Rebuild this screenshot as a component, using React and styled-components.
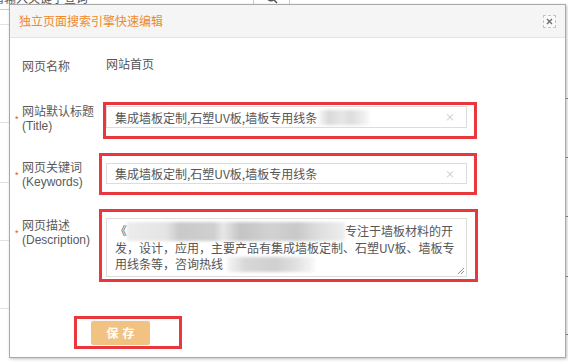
import React from 'react';
import styled, { createGlobalStyle } from 'styled-components';

const GlobalStyle = createGlobalStyle`
  html, body { margin: 0; padding: 0; background: #fff; }
  body {
    font-family: "Noto Sans CJK SC", "Noto Sans", sans-serif;
    overflow: hidden;
  }
`;

const Page = styled.div`
  position: relative;
  width: 568px;
  height: 364px;
  overflow: hidden;
  background: #fff;
`;

/* ---------- background page (mostly hidden) ---------- */
const Backdrop = styled.div`
  display: flex;
  flex-direction: column;
`;

const SearchBar = styled.div`
  display: flex;
  margin-top: -14px;
  height: 24px;
`;

const SearchInput = styled.div`
  width: 254px;
  box-sizing: border-box;
  border-right: 1px solid #ccc;
  border-bottom: 1px solid #ccc;
  font-size: 12px;
  line-height: 24px;
  color: #555;
  text-indent: -8px;
  white-space: nowrap;
  overflow: hidden;
`;

const SearchButton = styled.div`
  width: 36px;
  box-sizing: border-box;
  border-right: 1px solid #ccc;
  border-bottom: 1px solid #ccc;
  display: flex;
  align-items: center;
  justify-content: center;
  color: #444;
`;

const BgColumns = styled.div`
  display: flex;
  justify-content: space-between;
`;

const BgColumn = styled.div`
  width: ${p => p.$w}px;
  display: flex;
  flex-direction: column;
`;

const BgRow = styled.div`
  height: ${p => p.$h}px;
  box-sizing: border-box;
  border-bottom: 1px solid ${p => p.$c || '#e2e2e2'};
`;

/* ---------- dialog ---------- */
const Dialog = styled.div`
  position: absolute;
  left: 9px;
  top: 4px;
  width: 557px;
  height: 354px;
  box-sizing: border-box;
  background: #fff;
  border: 1px solid #a9a9a9;
  box-shadow: 1px 1px 3px rgba(0, 0, 0, 0.25);
  display: flex;
  flex-direction: column;
`;

const Header = styled.div`
  height: 32px;
  flex: none;
  background: #f5f5f5;
  border-bottom: 1px solid #e4e4e4;
  display: flex;
  align-items: center;
  justify-content: space-between;
  padding: 0 9px 0 9px;
`;

const Title = styled.h3`
  margin: 0;
  font-size: 12px;
  font-weight: normal;
  color: #ee8a2e;
  line-height: 16px;
`;

const CloseBtn = styled.button`
  width: 13px;
  height: 13px;
  padding: 0;
  margin-top: 1px;
  border: 1px dashed #c4c4c4;
  background: #fafafa;
  display: flex;
  align-items: center;
  justify-content: center;
  color: #777;
  cursor: pointer;
`;

const Body = styled.div`
  padding: 18px 0 0 12px;
  display: flex;
  flex-direction: column;
`;

const Row = styled.div`
  display: grid;
  grid-template-columns: 77px 1fr;
  align-items: start;
  margin-top: ${p => p.$mt || 0}px;
`;

const LabelCell = styled.div`
  display: flex;
  align-items: flex-start;
  margin-left: -7px;
`;

const Star = styled.span`
  width: 7px;
  flex: none;
  margin-top: ${p => (p.$pt || 0) + 9}px;
  font-family: "Liberation Sans", sans-serif;
  font-size: 9px;
  line-height: 10px;
  color: #e04b3a;
`;

const Label = styled.div`
  padding-top: ${p => p.$pt || 0}px;
  font-family: "Liberation Sans", "Noto Sans CJK SC", sans-serif;
  font-size: 12px;
  line-height: 14px;
  color: #5a5a5a;
  white-space: nowrap;
`;

const LabelLine = styled.span`
  display: block;
`;

const Value = styled.div`
  padding-left: 7px;
  font-size: 12px;
  line-height: 16px;
  color: #555;
`;

const Annot = styled.div`
  justify-self: start;
  margin-left: ${p => p.$ml || 0}px;
  border: 3px solid #e8383d;
  padding: ${p => p.$pad};
`;

const FieldBox = styled.div`
  width: 361px;
  height: ${p => p.$h}px;
  box-sizing: border-box;
  border: 1px solid #dcdcdc;
  background: #fff;
  padding: 0 8px;
  display: flex;
  align-items: center;
  justify-content: space-between;
  font-size: 12px;
  color: #555;
  white-space: nowrap;
`;

const FieldText = styled.span`
  display: flex;
  align-items: center;
`;

const Blur = styled.span`
  display: inline-block;
  width: ${p => p.$w}px;
  height: ${p => p.$h || 16}px;
  margin-left: ${p => p.$ml || 0}px;
  vertical-align: middle;
  background: ${p => p.$bg};
  filter: blur(1.5px);
`;

const Clear = styled.span`
  font-size: 10px;
  line-height: 10px;
  color: #c6c6c6;
  margin-right: 3px;
`;

const TextBox = styled.div`
  position: relative;
  width: 361px;
  height: 59px;
  box-sizing: border-box;
  border: 1px solid #dcdcdc;
  padding: 4px 6px 0 8px;
  font-size: 12px;
  line-height: 16.5px;
  color: #555;
`;

const TextLine = styled.div`
  white-space: nowrap;
  display: flex;
  align-items: center;
  height: 16.5px;
`;

const Grip = styled.svg`
  position: absolute;
  right: 1px;
  bottom: 1px;
`;

const SaveRow = styled.div`
  margin-top: 34px;
  margin-left: 52px;
  display: flex;
`;

const SaveButton = styled.button`
  width: 59px;
  height: 24px;
  border: none;
  border-radius: 2px;
  background: #f2c282;
  color: #fff;
  font-family: "Noto Sans CJK SC", sans-serif;
  font-size: 12px;
  font-weight: bold;
  letter-spacing: 4px;
  padding: 0 0 0 4px;
  cursor: pointer;
`;

const blurInput = 'linear-gradient(90deg, rgba(215,215,215,0.2), #d9d9d9 20%, #e6e6e6 45%, #dcdcdc 65%, rgba(230,230,230,0.3))';
const blurLine1 = 'linear-gradient(90deg, #ececec 0%, #e4e4e4 18%, #c9c9c9 24%, #cfcfcf 40%, #e8e8e8 44%, #c4c4c4 52%, #d2d2d2 66%, #c8c8c8 78%, #dedede 88%, #eeeeee 100%)';
const blurLine3 = 'linear-gradient(90deg, rgba(225,225,225,0.3), #d8d8d8 20%, #cfcfcf 55%, #e2e2e2 80%, rgba(235,235,235,0.3))';

export default function App() {
  const sideRows = [15, 98, 60, 58, 68, 60];
  const mainRows = [89, 59, 59, 60, 58, 40];
  return (
    <Page>
      <GlobalStyle />
      <Backdrop>
        <SearchBar>
          <SearchInput>请输入关键字查询</SearchInput>
          <SearchButton>
            <svg width="12" height="12" viewBox="0 0 12 12">
              <circle cx="5" cy="5" r="3.8" fill="none" stroke="#555" strokeWidth="1.4" />
              <line x1="7.8" y1="7.8" x2="11" y2="11" stroke="#555" strokeWidth="1.5" />
            </svg>
          </SearchButton>
        </SearchBar>
        <BgColumns>
          <BgColumn $w={120}>
            {sideRows.map((h, i) => <BgRow key={i} $h={h} />)}
          </BgColumn>
          <BgColumn $w={60}>
            {mainRows.map((h, i) => <BgRow key={i} $h={h} $c="#8a8a8a" />)}
          </BgColumn>
        </BgColumns>
      </Backdrop>

      <Dialog>
        <Header>
          <Title>独立页面搜索引擎快速编辑</Title>
          <CloseBtn aria-label="关闭">
            <svg width="7" height="7" viewBox="0 0 7 7">
              <path d="M1 1 L6 6 M6 1 L1 6" stroke="#6f6f6f" strokeWidth="1.4" />
            </svg>
          </CloseBtn>
        </Header>
        <Body>
          <Row>
            <Label $pt={4}>网页名称</Label>
            <Value>网站首页</Value>
          </Row>

          <Row $mt={28}>
            <LabelCell>
              <Star $pt={3}>*</Star>
              <Label $pt={3}>
                <LabelLine>网站默认标题</LabelLine>
                <LabelLine>(Title)</LabelLine>
              </Label>
            </LabelCell>
            <Annot $ml={4} $pad="1px 7px 8px 0">
              <FieldBox $h={22}>
                <FieldText>
                  集成墙板定制,石塑UV板,墙板专用线条
                  <Blur $w={50} $h={15} $ml={2} $bg={blurInput} />
                </FieldText>
                <Clear>×</Clear>
              </FieldBox>
            </Annot>
          </Row>

          <Row $mt={14}>
            <LabelCell>
              <Star $pt={8}>*</Star>
              <Label $pt={8}>
                <LabelLine>网页关键词</LabelLine>
                <LabelLine>(Keywords)</LabelLine>
              </Label>
            </LabelCell>
            <Annot $pad="7px 7px 8px 4px">
              <FieldBox $h={21}>
                <FieldText>集成墙板定制,石塑UV板,墙板专用线条</FieldText>
                <Clear>×</Clear>
              </FieldBox>
            </Annot>
          </Row>

          <Row $mt={14}>
            <LabelCell>
              <Star $pt={10}>*</Star>
              <Label $pt={10}>
                <LabelLine>网页描述</LabelLine>
                <LabelLine>(Description)</LabelLine>
              </Label>
            </LabelCell>
            <Annot $pad="6px 8px 2px 4px">
              <TextBox>
                <TextLine>
                  《<Blur $w={218} $h={19} $bg={blurLine1} />专注于墙板材料的开
                </TextLine>
                <TextLine>发，设计，应用，主要产品有集成墙板定制、石塑UV板、墙板专</TextLine>
                <TextLine>
                  用线条等，咨询热线
                  <Blur $w={88} $h={15} $ml={4} $bg={blurLine3} />
                </TextLine>
                <Grip width="9" height="9" viewBox="0 0 9 9">
                  <path d="M8 2 L2 8 M8 5 L5 8" stroke="#8c8c8c" strokeWidth="1" />
                </Grip>
              </TextBox>
            </Annot>
          </Row>

          <SaveRow>
            <Annot $pad="0 29px 1px 14px">
              <SaveButton>保存</SaveButton>
            </Annot>
          </SaveRow>
        </Body>
      </Dialog>
    </Page>
  );
}
